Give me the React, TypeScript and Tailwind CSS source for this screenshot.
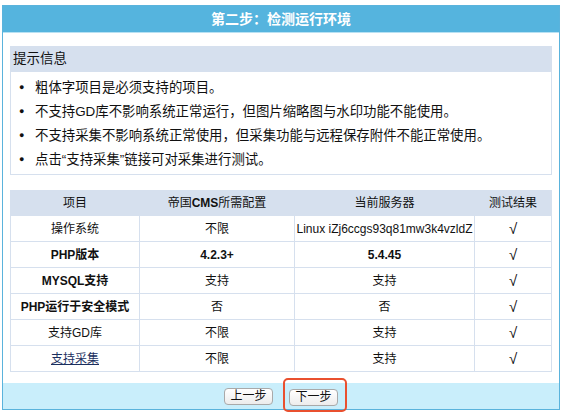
import React from 'react';

type Row = {
  name: React.ReactNode;
  need: string;
  current: string;
  bold?: boolean;
  boldValues?: boolean;
};

const rows: Row[] = [
  { name: '操作系统', need: '不限', current: 'Linux iZj6ccgs93q81mw3k4vzldZ' },
  { name: 'PHP版本', need: '4.2.3+', current: '5.4.45', bold: true, boldValues: true },
  { name: 'MYSQL支持', need: '支持', current: '支持', bold: true },
  { name: 'PHP运行于安全模式', need: '否', current: '否', bold: true },
  { name: '支持GD库', need: '不限', current: '支持' },
  {
    name: <a href="#" className="underline text-[#1b2f5e]">支持采集</a>,
    need: '不限',
    current: '支持',
  },
];

const tips = [
  '粗体字项目是必须支持的项目。',
  '不支持GD库不影响系统正常运行，但图片缩略图与水印功能不能使用。',
  '不支持采集不影响系统正常使用，但采集功能与远程保存附件不能正常使用。',
  '点击“支持采集”链接可对采集进行测试。',
];

const font = { fontFamily: '"Liberation Sans", "Noto Sans CJK SC", sans-serif' };

const App: React.FC = () => {
  return (
    <div className="w-[562px] h-[415px] bg-white pt-[5px] pl-[2px]" style={font}>
      <div className="w-[558px] h-[405px] border border-[#5ab3dc] flex flex-col">
        {/* Title bar */}
        <div className="h-[27px] bg-[#55b4de] border-b border-[#b8e1f3] flex items-center justify-center">
          <span className="text-white font-bold text-[14px]">第二步：检测运行环境</span>
        </div>

        <div className="flex-1 px-[7px] pt-[13px]">
          {/* Tips box */}
          <div className="border border-[#d6e0ee]">
            <div className="h-[25px] bg-[#d6e0ee] flex items-center pl-[2px] text-[13.5px] text-[#111]">
              提示信息
            </div>
            <ul className="pt-[4px] pb-[2px]">
              {tips.map((t, i) => (
                <li key={i} className="h-[24px] flex items-center text-[13.4px] text-[#111]">
                  <span className="w-[24px] pl-[8px] text-[9px]">●</span>
                  <span>{t}</span>
                </li>
              ))}
            </ul>
          </div>

          {/* Check table */}
          <table className="mt-[15px] w-[541px] table-fixed border-collapse text-[12px] text-[#111]">
            <colgroup>
              <col className="w-[129px]" />
              <col className="w-[155px]" />
              <col className="w-[180px]" />
              <col className="w-[77px]" />
            </colgroup>
            <thead>
              <tr className="bg-[#d6e0ee] h-[25px]">
                <th className="border border-[#d6e0ee] font-normal">项目</th>
                <th className="border border-[#d6e0ee] font-normal">
                  帝国<span className="font-bold">CMS</span>所需配置
                </th>
                <th className="border border-[#d6e0ee] font-normal">当前服务器</th>
                <th className="border border-[#d6e0ee] font-normal">测试结果</th>
              </tr>
            </thead>
            <tbody>
              {rows.map((r, i) => (
                <tr key={i} className="h-[26px]">
                  <td className={`border border-[#d6e0ee] text-center ${r.bold ? 'font-bold' : ''}`}>
                    {r.name}
                  </td>
                  <td className={`border border-[#d6e0ee] text-center ${r.boldValues ? 'font-bold' : ''}`}>
                    {r.need}
                  </td>
                  <td className={`border border-[#d6e0ee] text-center whitespace-nowrap ${r.boldValues ? 'font-bold' : ''}`}>
                    {r.current}
                  </td>
                  <td className="border border-[#d6e0ee] text-center text-[15px] leading-none">√</td>
                </tr>
              ))}
            </tbody>
          </table>
        </div>

        {/* Footer buttons */}
        <div className="h-[26px] bg-[#c9eefb] flex items-center justify-center gap-[16px]">
          <button className="w-[49px] h-[17px] rounded-[4px] border border-[#a9a9a9] bg-gradient-to-b from-white to-[#ececec] text-[12px] leading-none text-[#111]">
            上一步
          </button>
          <div className="relative">
            <button className="w-[49px] h-[17px] rounded-[4px] border border-[#a9a9a9] bg-gradient-to-b from-white to-[#ececec] text-[12px] leading-none text-[#111]">
              下一步
            </button>
            <div className="absolute -left-[6px] -right-[9px] -top-[6px] -bottom-[4px] border-2 border-[#e9502f] rounded-[5px] pointer-events-none" />
          </div>
        </div>
      </div>
    </div>
  );
};

export default App;
